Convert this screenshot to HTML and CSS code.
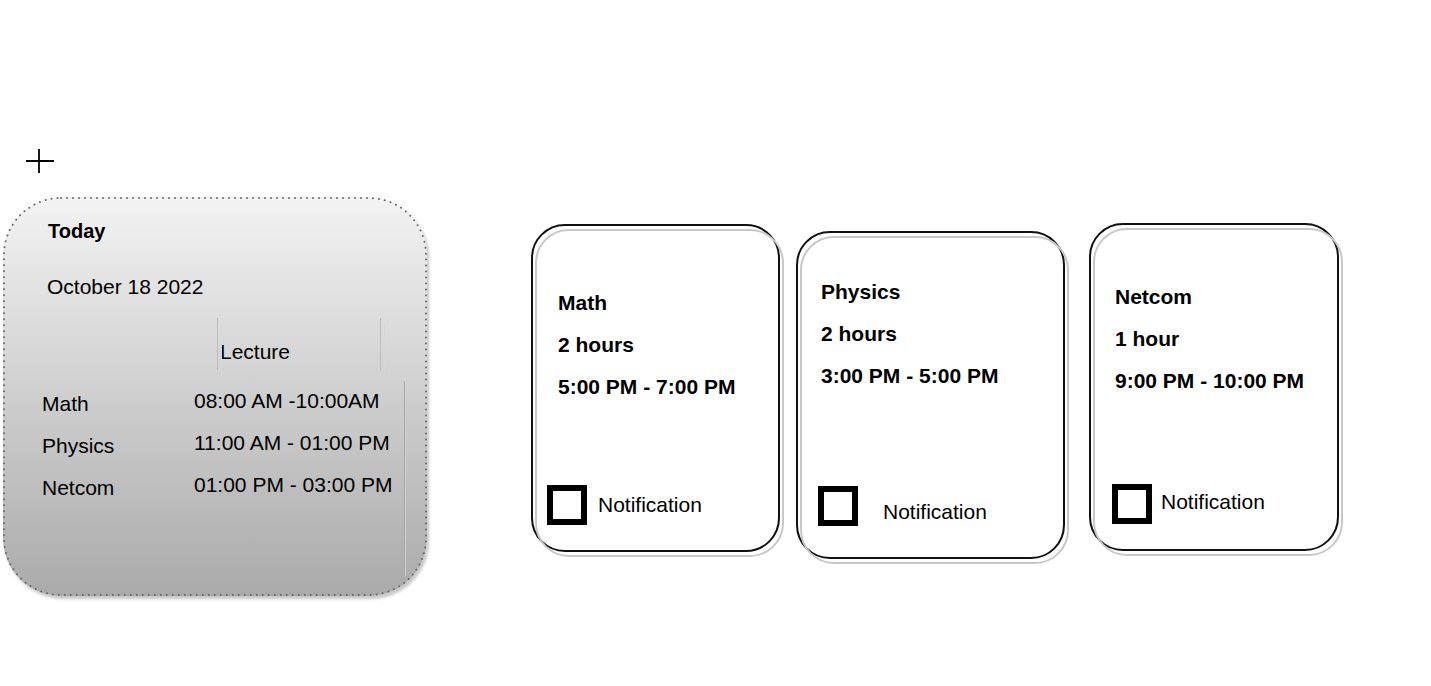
FILE: index.html
```html
<html lang="en">
<head>
    <title>Today - Lectures</title>
    <link rel="stylesheet" href="styles.css">
</head>
<body>
<div class="page">
    <svg class="add-icon" width="28" height="24" viewBox="0 0 28 24">
        <path d="M0 12H28M13 0V24" stroke="#000" stroke-width="1.8" fill="none"/>
    </svg>

    <div class="board">
        <section class="today-card">
            <svg class="card-outline"><rect/></svg>
            <h2 class="today-title">Today</h2>
            <p class="today-date">October 18 2022</p>
            <div class="schedule-head">Lecture</div>
            <div class="schedule">
                <div class="schedule-names">
                    <p>Math</p>
                    <p>Physics</p>
                    <p>Netcom</p>
                </div>
                <div class="schedule-times">
                    <p>08:00 AM -10:00AM</p>
                    <p>11:00 AM - 01:00 PM</p>
                    <p>01:00 PM - 03:00 PM</p>
                </div>
            </div>
        </section>

        <div class="course-card course-math">
            <p>Math</p>
            <p>2 hours</p>
            <p>5:00 PM - 7:00 PM</p>
            <label class="notify">
                <span class="notify-box"></span>
                <span class="notify-text">Notification</span>
            </label>
        </div>

        <div class="course-card course-physics">
            <p>Physics</p>
            <p>2 hours</p>
            <p>3:00 PM - 5:00 PM</p>
            <label class="notify">
                <span class="notify-box"></span>
                <span class="notify-text">Notification</span>
            </label>
        </div>

        <div class="course-card course-netcom">
            <p>Netcom</p>
            <p>1 hour</p>
            <p>9:00 PM - 10:00 PM</p>
            <label class="notify">
                <span class="notify-box"></span>
                <span class="notify-text">Notification</span>
            </label>
        </div>
    </div>
</div>
</body>
</html>
```

FILE: styles.css
```css
body {
    margin: 0;
    background-color: #fff;
    color: #000;
    font-family: "Liberation Sans", Arial, sans-serif;
    font-size: 21px;
    line-height: 24px;
}

p {
    margin: 0;
}

.page {
    padding-top: 149px;
}

.add-icon {
    display: block;
    margin-left: 26px;
}

.board {
    display: flex;
    align-items: flex-start;
    margin-top: 24px;
    padding-left: 3px;
}

/* today card */
.today-card {
    position: relative;
    box-sizing: border-box;
    flex: none;
    width: 424px;
    height: 399px;
    padding-top: 22px;
    border-radius: 58px;
    background: linear-gradient(#f3f3f3, #aaaaaa);
    box-shadow: 2px 3px 3px rgba(0, 0, 0, 0.22);
}

.card-outline {
    position: absolute;
    top: 0;
    left: 0;
    width: 100%;
    height: 100%;
    overflow: visible;
}

.card-outline rect {
    x: 1px;
    y: 1px;
    width: calc(100% - 2px);
    height: calc(100% - 2px);
    rx: 57px;
    fill: none;
    stroke: #666;
    stroke-width: 2;
    stroke-linecap: round;
    stroke-dasharray: 0 6;
}

.today-title {
    margin: 0 0 0 45px;
    font-size: 20px;
    line-height: 24px;
    font-weight: bold;
}

.today-date {
    margin: 32px 0 0 44px;
}

.schedule-head {
    position: relative;
    box-sizing: border-box;
    width: 164px;
    height: 52px;
    margin: 19px 0 0 214px;
    padding: 22px 0 0 2px;
    border-left: 1px solid #bdbdbd;
    border-right: 1px solid #bdbdbd;
}

.schedule-head::after {
    content: "";
    position: absolute;
    top: 5px;
    left: 3px;
    right: -5px;
    bottom: -7px;
    border-left: 1px solid #d6d6d6;
    border-right: 1px solid #d6d6d6;
}

.schedule {
    display: flex;
    margin-top: 11px;
    margin-left: 39px;
}

.schedule-names {
    width: 152px;
    padding-top: 11px;
}

.schedule-times {
    box-sizing: border-box;
    width: 211px;
    height: 195px;
    padding-top: 8px;
    border-right: 1px solid #a6a6a6;
    box-shadow: 1px 0 0 #d2d2d2;
}

.schedule-names p,
.schedule-times p {
    margin-bottom: 18px;
}

/* course cards */
.course-card {
    position: relative;
    box-sizing: border-box;
    flex: none;
    display: flex;
    flex-direction: column;
    height: 328px;
    border: 2px solid #111;
    border-radius: 34px;
    background-color: #fff;
    font-weight: bold;
}

.course-card::before {
    content: "";
    position: absolute;
    top: 3px;
    left: 2px;
    right: -6px;
    bottom: -7px;
    border: 2px solid #c8c8c8;
    border-radius: 34px;
}

.course-card p {
    margin-bottom: 18px;
}

.notify {
    display: flex;
    align-items: flex-start;
    margin-top: auto;
    font-weight: normal;
}

.notify-box {
    box-sizing: border-box;
    width: 40px;
    height: 40px;
    border: 6px solid #000;
}

.course-math {
    width: 249px;
    margin: 27px 0 0 104px;
    padding: 65px 0 25px 25px;
}

.course-math .notify {
    margin-left: -11px;
}

.course-math .notify-text {
    margin: 8px 0 0 11px;
}

.course-physics {
    width: 269px;
    margin: 34px 0 0 16px;
    padding: 47px 0 31px 23px;
}

.course-physics .notify {
    margin-left: -3px;
}

.course-physics .notify-text {
    margin: 14px 0 0 25px;
}

.course-netcom {
    width: 250px;
    margin: 26px 0 0 24px;
    padding: 60px 0 25px 24px;
}

.course-netcom .notify {
    margin-left: -3px;
}

.course-netcom .notify-text {
    margin: 6px 0 0 9px;
}
```
